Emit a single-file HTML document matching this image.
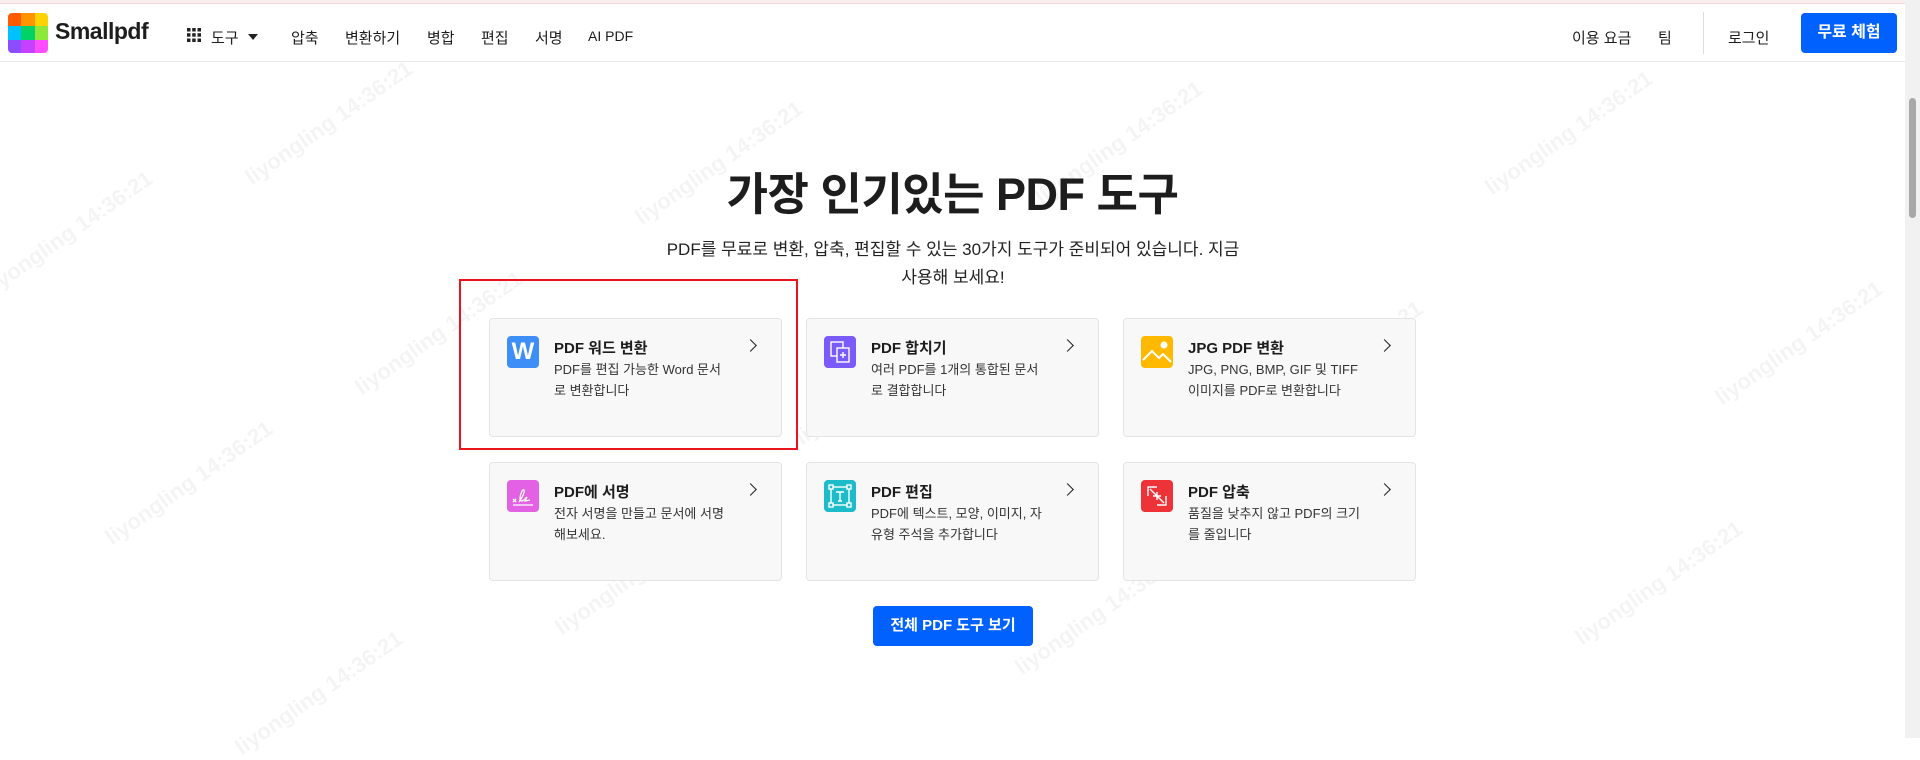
<!DOCTYPE html>
<html><head><meta charset="utf-8">
<style>
*{margin:0;padding:0;box-sizing:border-box}
body{width:1920px;height:738px;overflow:hidden;background:#fff;font-family:"Liberation Sans","Noto Sans CJK KR",sans-serif;color:#1d1d1d;position:relative}
.topline{position:absolute;left:0;top:0;width:1905px;height:4px;background:#fbeeee;border-bottom:1px solid #f2d6d6}
header{position:absolute;left:0;top:4px;width:1905px;height:58px;border-bottom:1px solid #e8e8e8}
.abs{position:absolute}
.nav{font-size:15px;top:23px}
.logo{left:8px;top:9px;width:40px;height:40px;border-radius:4px;overflow:hidden;display:grid;grid-template-columns:repeat(3,1fr)}
.card{position:absolute;width:293px;height:119px;background:#f8f8f8;border:1px solid #e4e4e4;border-radius:4px}
.ic{position:absolute;left:17px;top:17px;width:32px;height:32px;border-radius:4px}
.ct{position:absolute;left:64px;top:18px;font-size:15px;font-weight:bold}
.cd{position:absolute;left:64px;top:40px;width:172px;font-size:13px;line-height:21px;color:#333;word-break:break-all}
.ch{position:absolute;left:256px;top:22px;width:9px;height:9px;border-right:1.6px solid #222;border-top:1.6px solid #222;transform:rotate(45deg)}
.wm{position:absolute;color:rgba(0,0,0,0.045);font-size:22px;transform:rotate(-35deg);white-space:nowrap;font-weight:bold}
</style></head><body>
<div class="topline"></div>
<header>
<div class="abs logo">
<div style="background:#ff5a00"></div><div style="background:#ff9400"></div><div style="background:#ffd200"></div>
<div style="background:#00c1ff"></div><div style="background:#00d266"></div><div style="background:#8ee83c"></div>
<div style="background:#8b4dff"></div><div style="background:#c640ff"></div><div style="background:#ff4dff"></div>
</div>
<div class="abs" style="left:55px;top:14px;font-size:23px;font-weight:bold;letter-spacing:-0.5px">Smallpdf</div>
<svg class="abs" style="left:187px;top:24px" width="14" height="14" viewBox="0 0 14 14" fill="#222"><rect x="0" y="0" width="3.5" height="3.5"/><rect x="5.2" y="0" width="3.5" height="3.5"/><rect x="10.5" y="0" width="3.5" height="3.5"/><rect x="0" y="5.2" width="3.5" height="3.5"/><rect x="5.2" y="5.2" width="3.5" height="3.5"/><rect x="10.5" y="5.2" width="3.5" height="3.5"/><rect x="0" y="10.5" width="3.5" height="3.5"/><rect x="5.2" y="10.5" width="3.5" height="3.5"/><rect x="10.5" y="10.5" width="3.5" height="3.5"/></svg>
<div class="abs nav" style="left:211px">도구</div>
<div class="abs" style="left:248px;top:30px;width:0;height:0;border-left:5px solid transparent;border-right:5px solid transparent;border-top:6px solid #222"></div>
<div class="abs nav" style="left:291px">압축</div>
<div class="abs nav" style="left:345px">변환하기</div>
<div class="abs nav" style="left:427px">병합</div>
<div class="abs nav" style="left:481px">편집</div>
<div class="abs nav" style="left:535px">서명</div>
<div class="abs nav" style="left:588px;font-size:14px;top:24px">AI PDF</div>
<div class="abs nav" style="left:1572px">이용 요금</div>
<div class="abs nav" style="left:1658px">팀</div>
<div class="abs" style="left:1703px;top:8px;width:1px;height:42px;background:#ddd"></div>
<div class="abs nav" style="left:1728px">로그인</div>
<div class="abs" style="left:1801px;top:9px;width:96px;height:40px;background:#0061fe;border-radius:4px;color:#fff;font-weight:bold;font-size:16px;text-align:center;line-height:40px">무료 체험</div>
</header>
<div class="abs" style="left:1905px;top:0;width:15px;height:738px;background:#f1f1f1"></div>
<div class="abs" style="left:1909px;top:98px;width:7px;height:120px;background:#a8a8a8;border-radius:4px"></div>

<div class="wm" style="left:230px;top:110px">liyongling 14:36:21</div>
<div class="wm" style="left:620px;top:150px">liyongling 14:36:21</div>
<div class="wm" style="left:1020px;top:130px">liyongling 14:36:21</div>
<div class="wm" style="left:1470px;top:120px">liyongling 14:36:21</div>
<div class="wm" style="left:-30px;top:220px">liyongling 14:36:21</div>
<div class="wm" style="left:340px;top:320px">liyongling 14:36:21</div>
<div class="wm" style="left:780px;top:370px">liyongling 14:36:21</div>
<div class="wm" style="left:1240px;top:350px">liyongling 14:36:21</div>
<div class="wm" style="left:1700px;top:330px">liyongling 14:36:21</div>
<div class="wm" style="left:90px;top:470px">liyongling 14:36:21</div>
<div class="wm" style="left:540px;top:560px">liyongling 14:36:21</div>
<div class="wm" style="left:1000px;top:600px">liyongling 14:36:21</div>
<div class="wm" style="left:1560px;top:570px">liyongling 14:36:21</div>
<div class="wm" style="left:220px;top:680px">liyongling 14:36:21</div>

<div class="abs" style="left:0;width:1905px;top:158px;text-align:center;font-size:45px;font-weight:bold;letter-spacing:-0.5px">가장 인기있는 PDF 도구</div>
<div class="abs" style="left:658px;width:590px;top:236px;text-align:center;font-size:17px;line-height:28px;color:#222">PDF를 무료로 변환, 압축, 편집할 수 있는 30가지 도구가 준비되어 있습니다. 지금<br>사용해 보세요!</div>

<div class="card" style="left:489px;top:318px"><div class="ic" style="background:#3d8ef7;color:#fff;font-weight:bold;font-size:24px;text-align:center;line-height:32px">W</div><div class="ct">PDF 워드 변환</div><div class="cd">PDF를 편집 가능한 Word 문서로 변환합니다</div><div class="ch"></div></div>
<div class="card" style="left:806px;top:318px"><div class="ic" style="background:#7a5af8"><svg width="32" height="32" viewBox="0 0 32 32" fill="none" stroke="#fff" stroke-width="1.4"><rect x="7" y="6" width="12" height="14"/><rect x="13" y="12" width="12" height="14" fill="#7a5af8"/><path d="M19 16v6M16 19h6"/></svg></div><div class="ct">PDF 합치기</div><div class="cd">여러 PDF를 1개의 통합된 문서로 결합합니다</div><div class="ch"></div></div>
<div class="card" style="left:1123px;top:318px"><div class="ic" style="background:#ffb900"><svg width="32" height="32" viewBox="0 0 32 32" fill="none" stroke="#fff" stroke-width="2"><path d="M2 24l9-9 7 7 4-4 8 8"/><circle cx="23" cy="9" r="3.5" fill="#fff" stroke="none"/></svg></div><div class="ct">JPG PDF 변환</div><div class="cd">JPG, PNG, BMP, GIF 및 TIFF 이미지를 PDF로 변환합니다</div><div class="ch"></div></div>
<div class="card" style="left:489px;top:462px"><div class="ic" style="background:#e362e3"><svg width="32" height="32" viewBox="0 0 32 32" fill="none" stroke="#fff" stroke-width="1.3"><path d="M6 25h20"/><path d="M6 19l3 3M9 19l-3 3"/><path d="M12 22c3-4 6-10 5-12-1-2-4 4-4 9 0 3 3 2 5 0l2-2-2 4 5-1"/></svg></div><div class="ct">PDF에 서명</div><div class="cd">전자 서명을 만들고 문서에 서명해보세요.</div><div class="ch"></div></div>
<div class="card" style="left:806px;top:462px"><div class="ic" style="background:#1dbcc8"><svg width="32" height="32" viewBox="0 0 32 32" fill="none" stroke="#fff" stroke-width="1.4"><rect x="7" y="7" width="18" height="18"/><rect x="5" y="5" width="4" height="4" fill="#1dbcc8"/><rect x="23" y="5" width="4" height="4" fill="#1dbcc8"/><rect x="5" y="23" width="4" height="4" fill="#1dbcc8"/><rect x="23" y="23" width="4" height="4" fill="#1dbcc8"/><path d="M12 12h8M16 12v9M14 21h4"/></svg></div><div class="ct">PDF 편집</div><div class="cd">PDF에 텍스트, 모양, 이미지, 자유형 주석을 추가합니다</div><div class="ch"></div></div>
<div class="card" style="left:1123px;top:462px"><div class="ic" style="background:#ee3338"><svg width="32" height="32" viewBox="0 0 32 32" fill="none" stroke="#fff" stroke-width="1.4"><path d="M7 16V7h9M25 16v9h-9"/><path d="M9 9l7 7M16 12v4h-4M23 23l-7-7M16 20v-4h4"/></svg></div><div class="ct">PDF 압축</div><div class="cd">품질을 낮추지 않고 PDF의 크기를 줄입니다</div><div class="ch"></div></div>

<div class="abs" style="left:459px;top:279px;width:339px;height:171px;border:2px solid #e8161c"></div>
<div class="abs" style="left:873px;top:606px;width:160px;height:40px;background:#0061fe;border-radius:4px;color:#fff;font-weight:bold;font-size:15px;text-align:center;line-height:40px">전체 PDF 도구 보기</div>
</body></html>
